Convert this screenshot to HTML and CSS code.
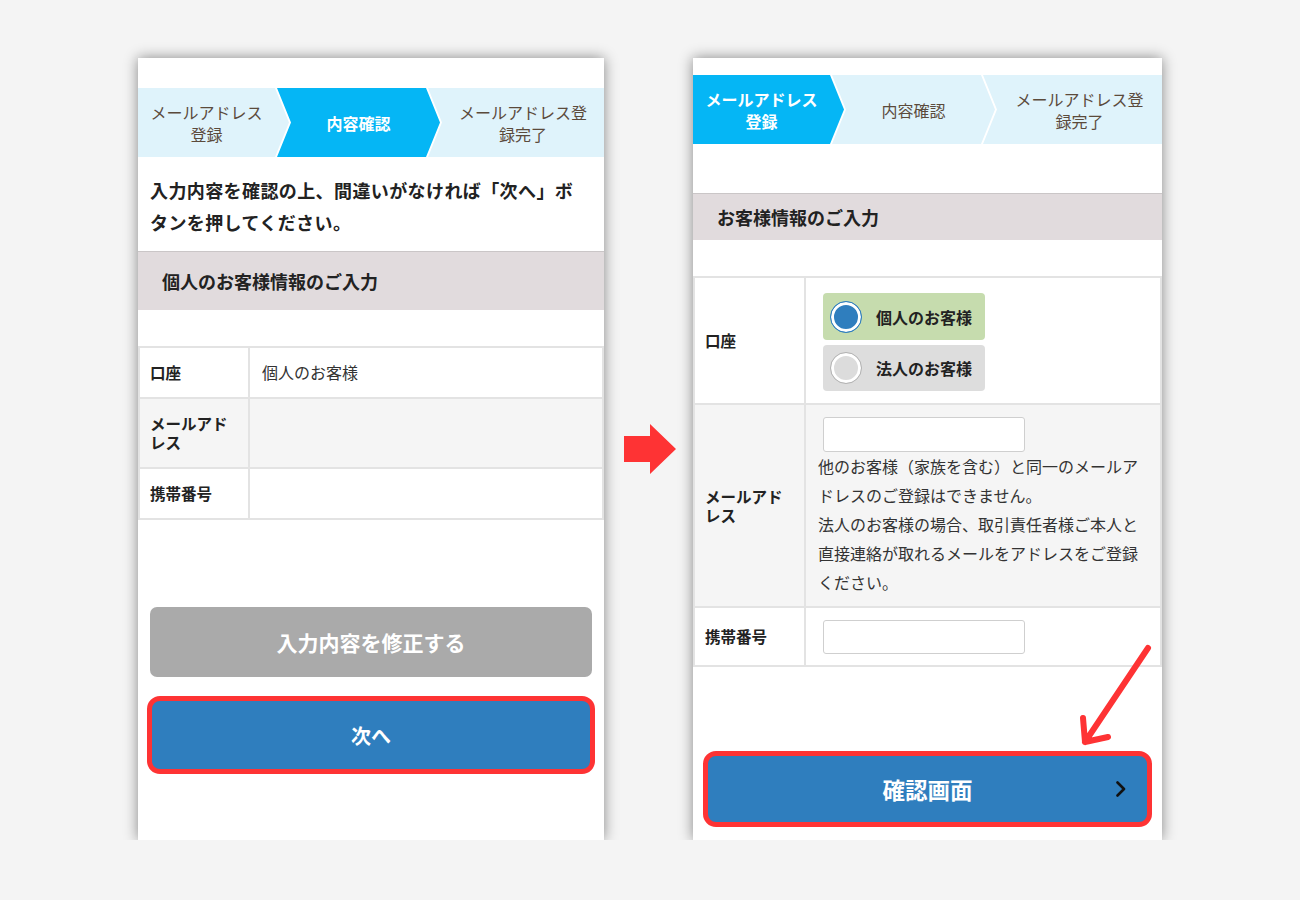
FILE: index.html
```html
<!DOCTYPE html>
<html lang="ja">
<head>
    <meta charset="UTF-8">
    <meta name="viewport" content="width=device-width, initial-scale=1.0">
    <title>メールアドレス登録</title>
    <link rel="stylesheet" href="styles.css">
</head>
<body>
    <div class="page">
        <!-- 内容確認 -->
        <div class="phone phone-confirm">
            <div class="steps">
                <div class="step step-first">メールアドレス<br>登録</div>
                <div class="step step-mid active">内容確認</div>
                <div class="step step-last">メールアドレス登<br>録完了</div>
            </div>
            <p class="lead">入力内容を確認の上、間違いがなければ「次へ」ボタンを押してください。</p>
            <div class="section-title">個人のお客様情報のご入力</div>
            <table class="form-table confirm">
                <tr><th>口座</th><td>個人のお客様</td></tr>
                <tr class="shaded"><th>メールアドレス</th><td></td></tr>
                <tr><th>携帯番号</th><td></td></tr>
            </table>
            <div class="actions">
                <button type="button" class="button secondary">入力内容を修正する</button>
                <button type="button" class="button primary marked">次へ</button>
            </div>
        </div>

        <div class="flow-arrow">
            <svg width="52" height="50" viewBox="0 0 52 50"><polygon points="0,12 26,12 26,0 52,25 26,50 26,38 0,38" fill="#fe3334"/></svg>
        </div>

        <!-- 入力画面 -->
        <div class="phone phone-entry">
            <div class="steps">
                <div class="step step-first active">メールアドレス<br>登録</div>
                <div class="step step-mid">内容確認</div>
                <div class="step step-last">メールアドレス登<br>録完了</div>
            </div>
            <div class="section-title">お客様情報のご入力</div>
            <table class="form-table entry">
                <tr>
                    <th>口座</th>
                    <td>
                        <div class="choices">
                            <label class="choice checked"><span class="radio"></span>個人のお客様</label>
                            <label class="choice"><span class="radio"></span>法人のお客様</label>
                        </div>
                    </td>
                </tr>
                <tr class="shaded">
                    <th>メールアドレス</th>
                    <td class="mail-cell">
                        <input type="text" class="text-input">
                        <p class="note">他のお客様（家族を含む）と同一のメールアドレスのご登録はできません。<br>法人のお客様の場合、取引責任者様ご本人と直接連絡が取れるメールをアドレスをご登録ください。</p>
                    </td>
                </tr>
                <tr>
                    <th>携帯番号</th>
                    <td><input type="text" class="text-input"></td>
                </tr>
            </table>
            <div class="actions">
                <button type="button" class="button primary marked large">確認画面
                    <svg class="chevron" width="12" height="16" viewBox="0 0 12 16"><polyline points="2.5,1.5 9,8 2.5,14.5" fill="none" stroke="#111" stroke-width="2.6" stroke-linecap="round" stroke-linejoin="round"/></svg>
                </button>
            </div>
            <svg class="hint-arrow" width="90" height="120" viewBox="0 0 90 120">
                <path d="M75 10 L12 104 M10 80 L12 104 L35 99" fill="none" stroke="#fe3334" stroke-width="6" stroke-linecap="round" stroke-linejoin="round"/>
            </svg>
        </div>
    </div>
</body>
</html>
```

FILE: styles.css
```css
body {
    margin: 0;
    background-color: #f4f4f4;
    font-family: "Noto Sans CJK JP", "Noto Sans", sans-serif;
    color: #222;
}
.page {
    display: flex;
    align-items: center;
    padding: 58px 0 0 138px;
}
.phone {
    position: relative;
    height: 782px;
    background: #ffffff;
    box-shadow: 0 0 13px rgba(0, 0, 0, 0.45);
    box-sizing: border-box;
}
.phone-confirm {
    width: 466px;
}
.phone-entry {
    width: 469px;
}
.flow-arrow {
    display: flex;
    margin: 0 17px 0 20px;
}

/* steps */
.steps {
    display: flex;
    height: 69px;
    background: #ffffff;
}
.phone-confirm .steps {
    margin-top: 30px;
}
.phone-entry .steps {
    margin-top: 17px;
}
.step {
    display: flex;
    align-items: center;
    justify-content: center;
    text-align: center;
    font-size: 16px;
    line-height: 22px;
    color: #5b4a3b;
    background: #dff3fb;
    box-sizing: border-box;
}
.step.active {
    background: #05b6f5;
    color: #ffffff;
    font-weight: bold;
}
.step-first {
    width: 151px;
    padding-right: 14px;
    clip-path: polygon(0 0, calc(100% - 14px) 0, 100% 50%, calc(100% - 14px) 100%, 0 100%);
}
.step-mid {
    width: 163px;
    margin-left: -12px;
    padding: 0 14px;
    clip-path: polygon(0 0, calc(100% - 14px) 0, 100% 50%, calc(100% - 14px) 100%, 0 100%, 14px 50%);
}
.step-last {
    flex: 1;
    margin-left: -12px;
    padding-left: 14px;
    clip-path: polygon(0 0, 100% 0, 100% 100%, 0 100%, 14px 50%);
}

.lead {
    margin: 0;
    padding: 17px 24px 13px 12px;
    font-size: 18px;
    letter-spacing: 0.4px;
    line-height: 32px;
    font-weight: bold;
}
.section-title {
    display: flex;
    align-items: center;
    padding-left: 24px;
    margin-bottom: 36px;
    background: #e1dbdd;
    border-top: 1px solid #cac6c7;
    font-size: 18px;
    font-weight: bold;
    box-sizing: border-box;
}
.phone-confirm .section-title {
    height: 59px;
}
.phone-entry .section-title {
    height: 47px;
    margin-top: 49px;
}

/* table */
.form-table {
    width: 100%;
    border-collapse: collapse;
    table-layout: fixed;
}
.form-table th,
.form-table td {
    border: 2px solid #e3e3e3;
    vertical-align: middle;
    text-align: left;
    box-sizing: border-box;
}
.form-table th {
    font-size: 15.5px;
    line-height: 19px;
    font-weight: bold;
    padding: 0 12px 0 10px;
}
.form-table td {
    font-size: 16px;
    color: #333;
}
.form-table tr.shaded th,
.form-table tr.shaded td {
    background: #f5f5f5;
}
.form-table.confirm th {
    width: 110px;
    padding-top: 15px;
    padding-bottom: 15px;
}
.form-table.confirm td {
    padding: 15px 12px;
    line-height: 19px;
}
.form-table.entry th {
    width: 111px;
}
.form-table.entry td {
    padding: 12px 18px 11px 17px;
}
.form-table.entry td.mail-cell {
    padding: 12px 18px 9px 12px;
}

.choices {
    display: flex;
    flex-direction: column;
    gap: 5px;
    width: 162px;
    padding: 3px 0 1px;
}
.choice {
    display: flex;
    align-items: center;
    gap: 14px;
    height: 47px;
    padding-left: 7px;
    border-radius: 4px;
    background: #dddddd;
    font-weight: bold;
    color: #222;
    box-sizing: border-box;
}
.choice + .choice {
    height: 46px;
}
.choice.checked {
    background: #c6dcae;
}
.radio {
    width: 32px;
    height: 32px;
    border-radius: 50%;
    border: 1px solid #b3b3b3;
    background: #dcdcdc;
    box-shadow: inset 0 0 0 3px #ffffff;
    box-sizing: border-box;
}
.choice.checked .radio {
    border-color: #2f7ebe;
    background: #2f7ebe;
}
.text-input {
    display: block;
    width: 202px;
    height: 34px;
    margin: 0;
    border: 1px solid #cfcfcf;
    border-radius: 3px;
    background: #ffffff;
    box-sizing: border-box;
}
.mail-cell .text-input {
    height: 35px;
    margin-left: 5px;
}
.note {
    margin: 0;
    font-size: 16px;
    line-height: 29px;
    color: #333;
}

/* buttons */
.actions {
    display: flex;
    flex-direction: column;
}
.phone-confirm .actions {
    margin-top: 87px;
    padding: 0 12px;
}
.phone-entry .actions {
    margin-top: 84px;
    padding: 0 10px;
}
.button {
    position: relative;
    display: flex;
    align-items: center;
    justify-content: center;
    width: 100%;
    border: none;
    font-family: inherit;
    font-weight: bold;
    color: #ffffff;
    cursor: pointer;
    box-sizing: border-box;
}
.button.secondary {
    height: 70px;
    border-radius: 7px;
    background: #aaaaaa;
    font-size: 21px;
}
.button.primary {
    background: #2f7ebe;
    font-size: 20px;
}
.button.marked {
    border: 5px solid #fe3334;
    border-radius: 13px;
}
.phone-confirm .button.marked {
    height: 78px;
    margin: 19px -3px 0;
    width: calc(100% + 6px);
}
.button.large {
    height: 76px;
    font-size: 22.5px;
}
.chevron {
    position: absolute;
    right: 20px;
    top: 50%;
    transform: translateY(-50%);
}
.hint-arrow {
    position: absolute;
    left: 380px;
    top: 580px;
}
```
